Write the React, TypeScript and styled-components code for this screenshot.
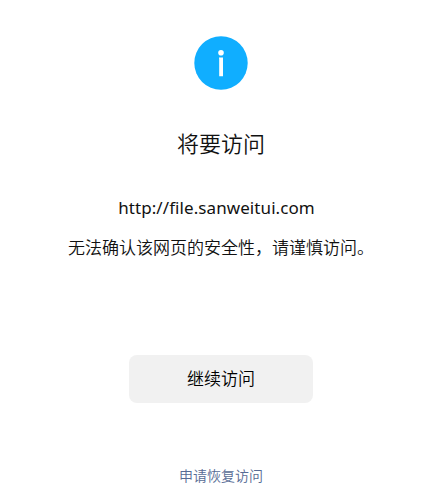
import React from "react";
import styled, { createGlobalStyle } from "styled-components";

const GlobalStyle = createGlobalStyle`
  * { box-sizing: border-box; }
  body { margin: 0; background: #fff; overflow: hidden; }
`;

const Page = styled.main`
  width: 442px;
  height: 496px;
  display: flex;
  flex-direction: column;
  align-items: center;
  padding-top: 36px;
  font-family: "Noto Sans", "Noto Sans CJK SC", sans-serif;
  font-weight: 350;
  color: #111;
`;

const InfoIcon = styled.svg`
  display: block;
  width: 54px;
  height: 54px;
  flex: none;
`;

const Title = styled.h1`
  margin: 36px 0 0;
  font-size: 22px;
  line-height: 34px;
  font-weight: inherit;
`;

const Address = styled.p`
  margin: 36px 9px 0 0;
  font-size: 17px;
  line-height: 24px;
  font-weight: 400;
  letter-spacing: 0.08px;
`;

const Message = styled.p`
  margin: 16px 0 0;
  font-size: 17px;
  line-height: 24px;
  white-space: nowrap;
`;

const ContinueButton = styled.button`
  margin: 95px 0 0;
  width: 184px;
  height: 48px;
  flex: none;
  border: 0;
  border-radius: 8px;
  background: #f1f1f1;
  color: #000;
  font: inherit;
  font-size: 17px;
  line-height: 24px;
`;

const AppealLink = styled.a`
  margin-top: 63px;
  font-size: 14px;
  line-height: 20px;
  color: #576b95;
  text-decoration: none;
`;

export default function App() {
  return (
    <>
      <GlobalStyle />
      <Page>
        <InfoIcon viewBox="0 0 54 54" aria-hidden="true">
          <circle cx="27" cy="27" r="26.7" fill="#10aeff" />
          <circle cx="27" cy="16.7" r="2.8" fill="#fff" />
          <path d="M25 21.5H29V40.2H25.2V22.5H25Z" fill="#fff" />
        </InfoIcon>
        <Title>将要访问</Title>
        <Address>http://file.sanweitui.com</Address>
        <Message>无法确认该网页的安全性，请谨慎访问。</Message>
        <ContinueButton>继续访问</ContinueButton>
        <AppealLink href="#">申请恢复访问</AppealLink>
      </Page>
    </>
  );
}
